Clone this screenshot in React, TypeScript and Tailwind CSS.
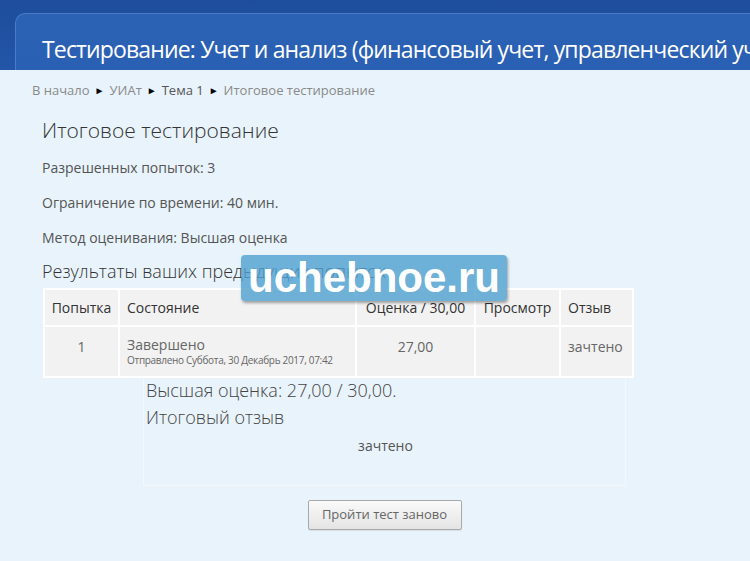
export default function App() {
  const font = { fontFamily: '"Open Sans", "Noto Sans", sans-serif' };
  return (
    <div className="relative w-[750px] h-[561px] overflow-hidden bg-[#e8f3fb]" style={font}>
      <header className="h-[70px] bg-gradient-to-b from-[#1d4d9c] to-[#2356a8] pt-[13px] pl-[15px]">
        <div className="h-full rounded-tl-[10px] bg-gradient-to-b from-[#2c62b4] to-[#2a60b3] border-t border-l border-[#4a7bc6] pl-[26px] pt-[20px]">
          <h1 className="text-white text-[23px] leading-[30px] whitespace-nowrap tracking-[-0.85px]">
            Тестирование: Учет и анализ (финансовый учет, управленческий учет)
          </h1>
        </div>
      </header>

      <nav className="pl-[32px] pt-[11px] text-[13px] leading-[18px] text-[#8a8a8a] flex items-center gap-[5px]">
        <span>В начало</span>
        <span className="text-[10px] text-black">►</span>
        <span>УИАт</span>
        <span className="text-[10px] text-black">►</span>
        <span className="text-[#555]">Тема 1</span>
        <span className="text-[10px] text-black">►</span>
        <span>Итоговое тестирование</span>
      </nav>

      <main className="pl-[42px] pt-[17px]">
        <h2 className="text-[21px] font-light text-[#333] leading-[28px]">Итоговое тестирование</h2>
        <div className="text-[14px] text-[#555] leading-[20px]">
          <p className="mt-[14px]">Разрешенных попыток: 3</p>
          <p className="mt-[15px]">Ограничение по времени: 40 мин.</p>
          <p className="mt-[15px]">Метод оценивания: Высшая оценка</p>
        </div>
        <h3 className="mt-[11px] text-[18px] font-light text-[#333] leading-[24px]">Результаты ваших предыдущих попыток</h3>

        <table className="ml-[1px] mt-[5px] border-collapse text-[14px] bg-[#f2f2f2]">
          <thead>
            <tr className="h-[37px] text-[#333]">
              <th className="w-[75px] border-2 border-white font-normal text-center">Попытка</th>
              <th className="w-[237px] border-2 border-white font-normal text-left pl-[7px]">Состояние</th>
              <th className="w-[119px] border-2 border-white font-normal text-center">Оценка / 30,00</th>
              <th className="w-[85px] border-2 border-white font-normal text-center">Просмотр</th>
              <th className="w-[73px] border-2 border-white font-normal text-left pl-[7px]">Отзыв</th>
            </tr>
          </thead>
          <tbody>
            <tr className="h-[51px] text-[#666] align-top">
              <td className="border-2 border-white text-center pt-[9px]">1</td>
              <td className="border-2 border-white pl-[7px] pt-[9px]">
                <div className="leading-[18px]">Завершено</div>
                <div className="text-[10px] leading-[13px] tracking-[-0.3px]">Отправлено Суббота, 30 Декабрь 2017, 07:42</div>
              </td>
              <td className="border-2 border-white text-center pt-[9px]">27,00</td>
              <td className="border-2 border-white"></td>
              <td className="border-2 border-white pl-[7px] pt-[9px]">зачтено</td>
            </tr>
          </tbody>
        </table>

        <section className="ml-[101px] w-[483px] h-[108px] border border-t-0 border-[#f4f8fb] pl-[2px] text-[#444]">
          <p className="text-[18px] font-light leading-[24px]">Высшая оценка: 27,00 / 30,00.</p>
          <p className="text-[18px] font-light leading-[24px] mt-[3px]">Итоговый отзыв</p>
          <p className="text-[14px] text-[#555] text-center leading-[20px] mt-[7px]">зачтено</p>
        </section>

        <div className="ml-[101px] w-[483px] flex justify-center pt-[14px]">
          <button className="h-[30px] w-[154px] rounded-[2px] border border-[#a9a9a9] bg-gradient-to-b from-[#fafafa] to-[#e4e4e4] text-[13px] text-[#666] shadow-[0_1px_1px_rgba(0,0,0,0.08)]">
            Пройти тест заново
          </button>
        </div>
      </main>

      <div className="absolute left-[241px] top-[255px] w-[266px] h-[46px] rounded-[4px] bg-[#4e9fcf]/80 shadow-[1px_2px_3px_rgba(0,0,0,0.35)] flex items-center justify-center">
        <span className="text-white text-[42px] font-bold leading-none" style={{ fontFamily: '"Liberation Sans", Arial, sans-serif' }}>
          uchebnoe.ru
        </span>
      </div>
    </div>
  );
}
